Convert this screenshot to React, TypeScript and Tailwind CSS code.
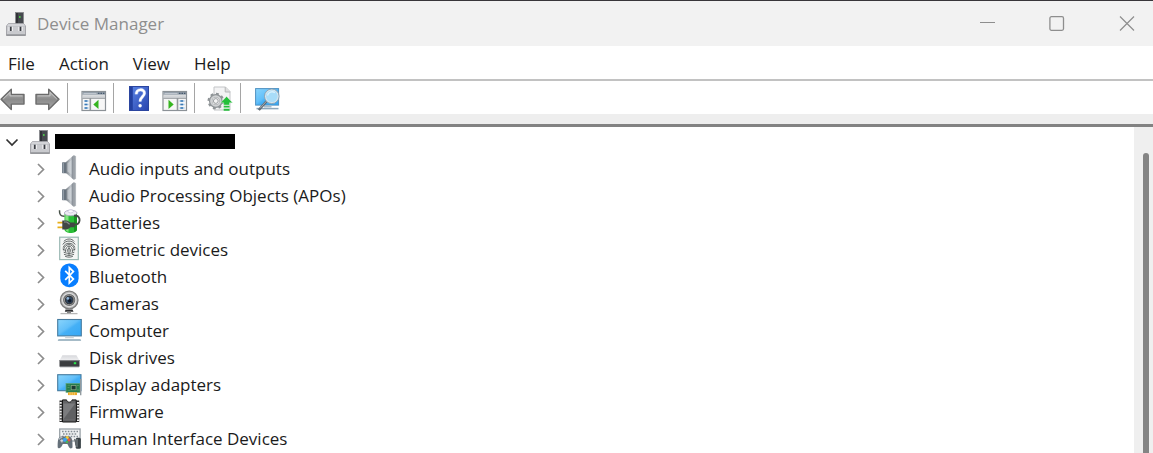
import React from "react";

type IconProps = { className?: string };

function DeviceIcon() {
  return (
    <svg width="20" height="24" viewBox="0 0 20 24" aria-hidden="true" className="shrink-0">
      <rect x="9.5" y="0.5" width="8" height="11.5" fill="#46494e" stroke="#85878a" strokeWidth="0.8" />
      <path d="M10 1h2v11h-2z" fill="#303237" />
      <rect x="13" y="4.2" width="1.6" height="1.6" fill="#4fe04a" />
      <path d="M2.5 11.5h15l2 2.5v9.5H.5V14z" fill="#b4b5ba" stroke="#909196" strokeWidth="0.7" />
      <path d="M2.5 11.7h15l1.5 2.3H1z" fill="#d3d4d8" />
      <path d="M1 14.3h18v8H1z" fill="#c9cace" />
      <path d="M3.6 14.8h2.2v4.2H3.6zM13.4 14.8h2.2v4.2h-2.2z" fill="#3a3d43" />
      <path d="M2.5 14.8h1.1v4.2H2.5zM5.8 14.8h1.1v4.2H5.8zM12.3 14.8h1.1v4.2h-1.1zM15.6 14.8h1.1v4.2h-1.1z" fill="#f2f2f4" />
      <path d="M.5 22.5h19v1H.5z" fill="#85868b" />
    </svg>
  );
}

function Icon({ children, size = 24 }: { children: React.ReactNode; size?: number }) {
  return (
    <svg width={size} height={size} viewBox={`0 0 ${size} ${size}`} aria-hidden="true" fill="none" className="shrink-0 overflow-visible">
      {children}
    </svg>
  );
}

function ArrowIcon({ className = "" }: IconProps) {
  return (
    <svg width="26" height="26" viewBox="0 0 26 26" aria-hidden="true" className={className}>
      <defs>
        <linearGradient id="arrow" x1="0" y1="0" x2="0" y2="1">
          <stop offset="0" stopColor="#b9b9b9" />
          <stop offset="0.5" stopColor="#8b8b8b" />
          <stop offset="1" stopColor="#a8a8a8" />
        </linearGradient>
      </defs>
      <path d="M1 14.2 11.3 4.2v5.3H24v9.6H11.3v5.4z" fill="url(#arrow)" stroke="#6b6b6b" strokeWidth="1.4" strokeLinejoin="round" />
      <path d="M3.2 14 10 7.4v3.5h12.5" fill="none" stroke="#cccccc" strokeWidth="0.9" />
    </svg>
  );
}

function PaneIcon({ flipped = false }: { flipped?: boolean }) {
  return (
    <Icon size={26}>
      <rect x="2" y="6.5" width="23.5" height="19" fill="#f7f7f7" stroke="#8c9297" strokeWidth="1.2" />
      <path d="M2.5 7h22.5v2.7H2.5z" fill="#8f9aa5" />
      <path d="M3.5 8.4h13" stroke="#c5ccd3" />
      <path d="M18 8.3h1.5M20.5 8.3H22M23 8.3h1.3" stroke="#46596d" strokeWidth="1.2" />
      <path d="M2.5 10.2h22.5v2.7H2.5z" fill="#d2d5d8" />
      <path d="M2.5 13.3h22.5" stroke="#93989c" />
      {flipped ? (
        <>
          <path d="M16.5 13v12" stroke="#93989c" strokeWidth="1.6" />
          <path d="m7.5 14.8 5.2 4.6-5.2 4.6z" fill="#36b51f" />
          <path d="M18.5 16h5M18.5 19.5h5M18.5 23h5" stroke="#9ec4e6" strokeWidth="1.5" />
          <path d="M19.5 16h2.5M19.5 19.5h2.5M19.5 23h2.5" stroke="#3b79b4" strokeWidth="1.5" />
        </>
      ) : (
        <>
          <path d="M10.3 13v12" stroke="#93989c" strokeWidth="1.6" />
          <path d="m18.5 14.8v9.2l-5.2-4.6z" fill="#36b51f" />
          <path d="M4 16h4.5M4 19.5h4.5M4 23h4.5" stroke="#9ec4e6" strokeWidth="1.5" />
          <path d="M4.8 16h2.5M4.8 19.5h2.5M4.8 23h2.5" stroke="#3b79b4" strokeWidth="1.5" />
        </>
      )}
    </Icon>
  );
}

function HelpIcon() {
  return (
    <Icon size={26}>
      <defs>
        <linearGradient id="help" x1="0" y1="0" x2="1" y2="1">
          <stop offset="0" stopColor="#5b86e6" />
          <stop offset="1" stopColor="#2944ae" />
        </linearGradient>
      </defs>
      <rect x="3.5" y="1.5" width="19" height="24" fill="url(#help)" stroke="#2b459f" />
      <path d="M4 2h2.8v23H4z" fill="#2340a0" />
      <path d="M10.3 9.2c0-5.9 8.3-5.6 8.1-.9-.1 3.2-4.3 3.7-4.3 8.2" stroke="#8fa8e8" strokeWidth="3.5" />
      <path d="M10.3 9.2c0-5.9 8.3-5.6 8.1-.9-.1 3.2-4.3 3.7-4.3 8.2" stroke="#ffffff" strokeWidth="2.3" />
      <circle cx="14.1" cy="20.7" r="1.7" fill="#ffffff" />
    </Icon>
  );
}

function UpdateIcon() {
  return (
    <Icon size={26}>
      <path d="M7 2h11.5l4.5 4.5V25H7z" fill="#f3f3f4" stroke="#c3c5c7" />
      <path d="M18.2 2v5h5" fill="#dedede" stroke="#b5b7b9" />
      <circle cx="8.8" cy="16" r="5.2" stroke="#8f9497" strokeWidth="3.4" fill="#ededed" />
      <circle cx="8.8" cy="16" r="7.2" stroke="#8f9497" strokeWidth="2.2" strokeDasharray="2.8 2.85" />
      <circle cx="8.8" cy="16" r="4.7" stroke="#cfd1d3" strokeWidth="2" />
      <circle cx="8.8" cy="16" r="2.4" fill="#f4f4f4" stroke="#868b8f" strokeWidth="0.8" />
      <path d="m19.6 11.5 6 6.2h-3.1v2.3h-5.8v-2.3h-3.1z" fill="#24bf3a" stroke="#e8f6e9" strokeWidth="0.4" />
      <path d="M16.7 20.8h5.8v1.8h-5.8zM16.7 23.8h5.8v2h-5.8z" fill="#24bf3a" />
    </Icon>
  );
}

function ScreenGradient({ id }: { id: string }) {
  return (
    <defs>
      <linearGradient id={id} x1="0" y1="0" x2="1" y2="1">
        <stop offset="0" stopColor="#8ad5fc" />
        <stop offset="0.45" stopColor="#62bff9" />
        <stop offset="0.55" stopColor="#45b0f6" />
        <stop offset="1" stopColor="#35a7f5" />
      </linearGradient>
    </defs>
  );
}

function ScanIcon() {
  return (
    <Icon size={26}>
      <ScreenGradient id="scan" />
      <rect x="2.6" y="3.6" width="23" height="16.5" fill="url(#scan)" stroke="#4f91c2" />
      <path d="M11 20.5h7.5v2H11z" fill="#a9bccb" />
      <path d="M3.5 23.6h22" stroke="#8da6ba" strokeWidth="1.5" />
      <path d="m13.8 16-8 9" stroke="#606a74" strokeWidth="2.6" />
      <path d="m13.6 16-6.5 7.2" stroke="#a7b0b8" strokeWidth="0.9" />
      <circle cx="18.8" cy="11.3" r="6.6" fill="#a8dcf8" stroke="#d5e5ee" strokeWidth="1.6" />
      <circle cx="18.8" cy="11.3" r="7.3" stroke="#8198aa" strokeWidth="0.8" />
      <path d="M14.5 10.5a4.6 4.6 0 0 1 7.4-2.7" stroke="#d9f1fd" strokeWidth="1.4" />
    </Icon>
  );
}

function SpeakerIcon() {
  return (
    <Icon>
      <defs>
        <linearGradient id="cone" x1="0" y1="0" x2="1" y2="0">
          <stop offset="0" stopColor="#7d848b" />
          <stop offset="0.55" stopColor="#c2c7cc" />
          <stop offset="0.8" stopColor="#858c94" />
          <stop offset="1" stopColor="#a3a8ad" />
        </linearGradient>
      </defs>
      <path d="M9 7 16 .7h1.5v23.5H16L9 18z" fill="url(#cone)" />
      <path d="M16.2.5c1.8 0 2.6.3 2.6 1.2v21.5c0 .9-.8 1.2-2.6 1.2z" fill="#9da3a9" />
      <path d="M18.6 1v23" stroke="#b5babf" strokeWidth="0.7" />
      <path d="M5 7.5c2-.7 4 .1 4.3-.8v12c-.6-.8-2.8-.1-4.3-.6z" fill="#68737e" />
      <path d="M6.2 8v10" stroke="#a5b0ba" />
      <path d="m10.5 8.3 4-3.4v14.5l-4-3z" fill="#d3d8dd" opacity="0.6" />
    </Icon>
  );
}

function BatteryIcon() {
  return (
    <Icon>
      <path d="M7.5 4.5v16c0 4.6 12.5 4.6 12.5 0v-16z" fill="#29bd37" />
      <path d="M8.3 5v15c.7 2.1 2 2.4 3.2 2.7V6z" fill="#83e47e" />
      <path d="M17 5.8 20 4.7v16c-.7 1.4-1.7 2-3 2.4z" fill="#159420" />
      <ellipse cx="13.7" cy="4" rx="6.3" ry="2.8" fill="#ecebf3" stroke="#aaa6be" strokeWidth="0.8" />
      <ellipse cx="13.7" cy="2.3" rx="2.7" ry="1.6" fill="#f9f9fc" stroke="#bebbd1" strokeWidth="0.6" />
      <path d="M2.5 1.2c-.2 4.1 1.1 6.3 5 6.1" stroke="#465047" strokeWidth="1.5" />
      <path d="M17 15.5c6.8 1.3 7.3-8.5 2-8.8h-2" stroke="#464b48" strokeWidth="1.9" />
      <path d="M.5 13.6h5.6M.5 18.4h5.6" stroke="#e7ae18" strokeWidth="1.7" />
      <path d="M5.3 11.4h4.2c1.6.2 2.2 1.4 4 2.2h4.2v4.6h-4c-1.6.7-2.8 2.4-4.4 2.4h-4z" fill="#414645" />
      <path d="M7 13h2.8l2.8 2.2" stroke="#8a928f" strokeWidth="1.2" />
    </Icon>
  );
}

function FingerprintIcon() {
  return (
    <Icon>
      <rect x="2.7" y="1.2" width="18.6" height="22.4" fill="#f4f6f5" stroke="#9ab8b3" strokeWidth="1.2" />
      <g stroke="#5c6161" strokeWidth="0.95" strokeLinecap="round">
        <path d="M7 5.2c2.7-3 7.8-3 10 0M6 8.2c2.5-4.3 9.5-4.3 12 0M6.3 11.2c1.3-5.4 10.1-5.4 11.4 0M6.5 14c.7-7.3 10.3-7.3 11 0" />
        <path d="M8.4 15.5c.1-7.3 7.1-7.3 7.2 0M10.3 15.4c0-4.3 3.4-4.3 3.4 0M6 13.2l2 1.1M16 14.2l2.1-1M7 16.3c3.4 1.5 6.7 1.5 10 0M7.3 18.4c3.2 1.4 6.2 1.4 9.4 0M8.5 20.5c2.5.9 4.7.9 7 0M12 10.8v8.5" />
      </g>
    </Icon>
  );
}

function BluetoothIcon() {
  return (
    <Icon>
      <rect x="3.3" y="0.4" width="18.3" height="23.8" rx="8.8" fill="#087eff" />
      <path d="m8.2 7.8 8.2 8.3-4.1 4V4.6l4.1 4-8.2 8.2" stroke="#ffffff" strokeWidth="1.7" strokeLinejoin="miter" />
    </Icon>
  );
}

function CameraIcon() {
  return (
    <Icon>
      <path d="M8.5 19.5h7l1 2.2H7.8z" fill="#303133" />
      <path d="M3.5 23.6h17" stroke="#b6b6b6" strokeWidth="1.3" />
      <path d="M10 21.5h4v1.7h-4z" fill="#858585" />
      <circle cx="12.2" cy="10" r="8.8" fill="#b9b9b9" stroke="#7b7b7b" strokeWidth="1.2" />
      <circle cx="12.2" cy="10" r="6.7" fill="#656667" stroke="#dcdcdc" strokeWidth="1.2" />
      <circle cx="12.2" cy="10" r="4.8" fill="#34383d" stroke="#969696" />
      <circle cx="12.2" cy="10" r="3.3" fill="#30455e" />
      <circle cx="12.7" cy="10.7" r="1.8" fill="#101a29" />
      <circle cx="10.8" cy="8.4" r="1.3" fill="#92b4d5" />
    </Icon>
  );
}

function ComputerIcon() {
  return (
    <Icon>
      <ScreenGradient id="computer" />
      <rect x="0.7" y="2.5" width="23.6" height="16.4" fill="url(#computer)" stroke="#457b9f" strokeWidth="1.1" />
      <path d="M8.5 19.5h7.8l.8 1.8H7.8z" fill="#cbd2d5" />
      <path d="M1.5 22.3h22l.7 1.5H.7z" fill="#89a4b4" />
    </Icon>
  );
}

function DiskIcon() {
  return (
    <Icon>
      <defs>
        <linearGradient id="disk" x1="0" y1="0" x2="0" y2="1">
          <stop offset="0" stopColor="#d7d8dc" />
          <stop offset="1" stopColor="#efeff1" />
        </linearGradient>
      </defs>
      <path d="M5.4 11.3h14l3.1 5.2H2.5z" fill="url(#disk)" />
      <path d="M2.5 16h20v6c0 .8-.5 1-1 1h-18c-.7 0-1-.3-1-1z" fill="#3b3d40" />
      <path d="M2.7 16.6h19.6" stroke="#85878a" />
      <path d="M3 22.8h19" stroke="#8d8f93" />
      <rect x="16.8" y="18.2" width="2.4" height="2" fill="#28e64a" />
    </Icon>
  );
}

function DisplayIcon() {
  return (
    <Icon>
      <ScreenGradient id="display" />
      <rect x="0.7" y="3.7" width="23.3" height="16" fill="url(#display)" stroke="#457b9f" strokeWidth="1.1" />
      <rect x="9" y="12.5" width="14" height="8.8" fill="#267b4c" stroke="#62a57c" strokeWidth="0.7" />
      <path d="M10.5 14.2h2.5M10.5 16.5h2M10.5 19.3h3M20 14.5h2M20 19h2" stroke="#5da069" strokeWidth="0.8" />
      <rect x="14.2" y="14.5" width="4.8" height="4.3" fill="#1d3934" stroke="#86a883" strokeWidth="0.8" />
      <path d="M11 21.3h9v2.8h-9z" fill="#eeaa28" />
      <path d="M13 21.5V24M15.2 21.5V24M17.4 21.5V24" stroke="#fff0b0" strokeWidth="0.5" />
      <path d="M23.7 8v16.3" stroke="#929ba0" strokeWidth="1.4" />
    </Icon>
  );
}

function ChipIcon() {
  return (
    <Icon>
      <path d="M5 2.5v21.5M19.7 2.5v21.5" stroke="#2b2b2b" strokeWidth="5" />
      <path d="M3.6 4v19.5M21.1 4v19.5" stroke="#f4f4f4" strokeWidth="2.2" strokeDasharray="1.7 1.2" />
      <path d="M5.5 1.9h4.1c.2 3 5.2 3 5.4 0h4.2v22.1H5.5z" fill="#626365" stroke="#171717" strokeWidth="1" />
      <path d="M6.3 5.5h12v16h-12z" fill="#7b7c7e" />
      <path d="M18.2 5.5v16h-12z" fill="#606163" />
    </Icon>
  );
}

function HidIcon() {
  return (
    <Icon>
      <rect x="2.7" y="4" width="20.4" height="12" fill="#f0f2f3" stroke="#9aa2a8" strokeWidth="1.3" />
      <path d="M5 6.5h16M6 9h14M5 11.5h16" stroke="#838c94" strokeWidth="1.3" strokeDasharray="1.6 1.3" />
      <path d="M4 11.4h8c3.3.3 3.8 4.7 3.5 11.2-2.8 2.4-3.7-.8-5.1-3.5H5.8c-1.4 3.2-3 5.4-5.1 3.3C.6 16 1 12 4 11.4Z" fill="#65707a" />
      <path d="M2 14.5c.5-1.8 1.5-2.1 3.4-2.1" stroke="#b2bac0" strokeWidth="1.2" />
      <path d="M3.2 15.8h3.3M4.9 14.2v3.3" stroke="#dfe4e8" />
      <circle cx="10.2" cy="12.8" r="1.7" fill="#f1ca36" />
      <circle cx="8" cy="14.8" r="2.1" fill="#3ba2ef" />
      <circle cx="12" cy="15" r="1.4" fill="#e65845" />
      <circle cx="10" cy="17" r="1.3" fill="#4cb452" />
      <path d="M17 14.5c2 0 1.4 4.3 2 6" stroke="#6c7478" strokeWidth="1.4" />
      <rect x="18.7" y="12.7" width="5.2" height="11" rx="1.5" fill="#3c4449" />
      <path d="M20 14v8.2" stroke="#8a9499" />
    </Icon>
  );
}

const devices = [
  { name: "Audio inputs and outputs", icon: <SpeakerIcon /> },
  { name: "Audio Processing Objects (APOs)", icon: <SpeakerIcon /> },
  { name: "Batteries", icon: <BatteryIcon /> },
  { name: "Biometric devices", icon: <FingerprintIcon /> },
  { name: "Bluetooth", icon: <BluetoothIcon /> },
  { name: "Cameras", icon: <CameraIcon /> },
  { name: "Computer", icon: <ComputerIcon /> },
  { name: "Disk drives", icon: <DiskIcon /> },
  { name: "Display adapters", icon: <DisplayIcon /> },
  { name: "Firmware", icon: <ChipIcon /> },
  { name: "Human Interface Devices", icon: <HidIcon /> },
];

function Separator() {
  return <span className="mr-3 ml-[7px] h-[30px] w-px shrink-0 bg-[#a5a5a5]" />;
}

function ToolButton({ label, children }: { label: string; children: React.ReactNode }) {
  return (
    <button type="button" aria-label={label} className="size-[26px] shrink-0">
      {children}
    </button>
  );
}

export default function App() {
  return (
    <div className="flex min-h-screen flex-col bg-white font-['Open_Sans','Noto_Sans',sans-serif] text-[17px] text-[#1b1b1b]">
      <header className="flex h-[46px] items-center border-t border-[#38363a] bg-[#f2f2f2] pr-[18px] pl-1.5 text-[#8e8e8e]">
        <DeviceIcon />
        <h1 className="ml-[11px] flex-1">Device Manager</h1>
        <div className="flex gap-[54px]">
          <button type="button" aria-label="Minimize" className="size-4">
            <svg width="16" height="16" fill="none" stroke="currentColor"><path d="M1 6.5h15" /></svg>
          </button>
          <button type="button" aria-label="Maximize" className="size-4">
            <svg width="16" height="16" fill="none" stroke="currentColor" strokeWidth="1.3"><rect x="0.9" y="0.7" width="13.6" height="13.6" rx="1.5" /></svg>
          </button>
          <button type="button" aria-label="Close" className="size-4">
            <svg width="16" height="16" fill="none" stroke="currentColor" strokeWidth="1.2"><path d="m1 0.5 14 14M15 0.5 1 14.5" /></svg>
          </button>
        </div>
      </header>

      <nav className="flex h-[35px] items-center gap-6 border-b-2 border-[#c2c2c2] px-2 pt-0.5">
        <button type="button">File</button>
        <button type="button">Action</button>
        <button type="button">View</button>
        <button type="button">Help</button>
      </nav>

      <div className="flex h-[33px] items-center">
        <ToolButton label="Back"><ArrowIcon /></ToolButton>
        <span className="w-2" />
        <ToolButton label="Forward"><ArrowIcon className="-scale-x-100" /></ToolButton>
        <Separator />
        <ToolButton label="Show console tree"><PaneIcon /></ToolButton>
        <Separator />
        <ToolButton label="Help"><HelpIcon /></ToolButton>
        <span className="w-[9px]" />
        <ToolButton label="Show action pane"><PaneIcon flipped /></ToolButton>
        <Separator />
        <ToolButton label="Update driver"><UpdateIcon /></ToolButton>
        <Separator />
        <ToolButton label="Scan for hardware changes"><ScanIcon /></ToolButton>
      </div>
      <div className="h-[13px] border-b-[3px] border-[#828282] bg-[#eeeeee]" />

      <main className="flex flex-1">
        <ul role="tree" aria-label="Devices" className="flex-1 pt-px">
          <li role="treeitem" aria-expanded="true" aria-label="This computer">
            <div className="flex h-[27px] items-center pl-1">
              <button type="button" aria-label="Collapse" className="mr-2.5 size-4">
                <svg width="16" height="16" fill="none" stroke="#333333" strokeWidth="1.7"><path d="m2.5 5.5 5.5 5.5 5.5-5.5" /></svg>
              </button>
              <DeviceIcon />
              <span className="ml-[5px] h-[15px] w-[180px] bg-black" />
            </div>
            <ul role="group">
              {devices.map((device) => (
                <li key={device.name} role="treeitem" aria-expanded="false" className="flex h-[27px] items-center pl-8">
                  <button type="button" aria-label={`Expand ${device.name}`} className="mr-[9px] size-4">
                    <svg width="16" height="16" fill="none" stroke="#8d8d8d" strokeWidth="1.7"><path d="m6 3 5.5 5.5L6 14" /></svg>
                  </button>
                  <span className="h-full w-8">{device.icon}</span>
                  <span>{device.name}</span>
                </li>
              ))}
            </ul>
          </li>
        </ul>
        <div className="w-[19px] bg-[#efefef] pt-[26px] pl-[9px]">
          <div className="h-full w-1.5 rounded-t-sm bg-[#848484]" />
        </div>
      </main>
    </div>
  );
}
